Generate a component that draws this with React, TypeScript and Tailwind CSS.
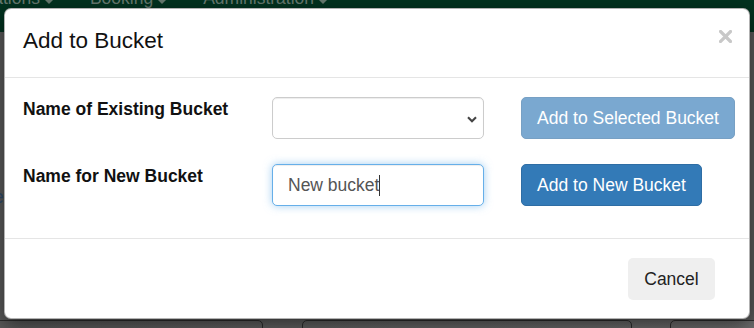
import React from "react";

function Caret() {
  return (
    <span className="inline-block shrink-0 w-0 h-0 border-l-[5px] border-r-[5px] border-t-[5px] border-l-transparent border-r-transparent border-t-[#66796f] ml-[4px]" />
  );
}

export default function App() {
  return (
    <div className="relative w-[754px] h-[328px] overflow-hidden bg-[#5a5a5a] font-['Liberation_Sans',Arial,sans-serif]">
      {/* page behind the backdrop */}
      <nav className="h-[32px] bg-[#02321f] overflow-hidden">
        <div className="flex items-baseline -mt-[14.5px] text-[17.5px] leading-[25px] text-[#66796f] whitespace-nowrap">
          <span className="shrink-0 -ml-[35px]">Locations</span>
          <Caret />
          <span className="shrink-0 ml-[36px]">Booking</span>
          <Caret />
          <span className="shrink-0 ml-[36px]">Administration</span>
          <Caret />
        </div>
      </nav>
      <div className="pt-[152.5px] -ml-[6px] text-[17.5px] leading-[25px] text-[#2d4a6b]">e</div>
      <div className="mt-[110.5px] flex h-[20px] bg-gradient-to-r from-[#595959] to-[#6c6c6c]">
        <div className="shrink-0 -ml-[10px] w-[273px] h-[20px] border border-[#2c2c2c] rounded-[5px]" />
        <div className="shrink-0 ml-[39px] w-[330px] h-[20px] border border-[#2c2c2c] rounded-[5px]" />
        <div className="shrink-0 ml-[38px] w-[100px] h-[20px] border border-[#2c2c2c] rounded-[5px]" />
      </div>

      {/* modal */}
      <div className="absolute left-[4px] top-[8px] w-[746px] h-[311px] bg-white rounded-[7px] border border-black/30 shadow-[0_6px_19px_rgba(0,0,0,0.5)] flex flex-col text-[#111]">
        <div className="h-[69px] border-b border-[#e5e5e5] flex items-start justify-between pl-[18px] pr-[17px]">
          <h4 className="mt-[16px] text-[22.5px] leading-[32px] text-[#111]">Add to Bucket</h4>
          <svg className="mt-[21px]" width="13" height="13" viewBox="0 0 13 13">
            <path d="M1.5 1.5 L11.5 11.5 M11.5 1.5 L1.5 11.5" stroke="#c8c8c8" strokeWidth="3.2" strokeLinecap="square" />
          </svg>
        </div>

        <div className="h-[160px] pt-[19px] pl-[18px]">
          <div className="flex">
            <label className="w-[249px] text-[17.5px] leading-[25px] font-bold text-[#111]">Name of Existing Bucket</label>
            <div className="w-[212px] h-[42px] border border-[#cccccc] rounded-[5px] bg-white shadow-[inset_0_1px_1px_rgba(0,0,0,0.075)] flex items-center justify-end pr-[6px]">
              <svg width="10" height="7" viewBox="0 0 10 7" className="mt-[2px]">
                <path d="M1 1.2 L5 5.2 L9 1.2" fill="none" stroke="#444" strokeWidth="2.1" />
              </svg>
            </div>
            <button className="ml-[37px] w-[214px] h-[42px] rounded-[5px] bg-[#7aa8d0] border border-[#77a0c4] text-white text-[17.5px] leading-[25px]">
              Add to Selected Bucket
            </button>
          </div>

          <div className="flex mt-[25px]">
            <label className="w-[249px] text-[17.5px] leading-[25px] font-bold text-[#111]">Name for New Bucket</label>
            <div className="w-[212px] h-[42px] border border-[#66afe9] rounded-[5px] bg-white shadow-[0_0_8px_rgba(102,175,233,0.6),inset_0_1px_1px_rgba(0,0,0,0.075)] flex items-center pl-[15px] text-[17.5px] text-[#555]">
              <span>New bucket</span>
              <span className="w-px h-[21px] bg-[#333] mt-[1px]" />
            </div>
            <button className="ml-[37px] w-[181px] h-[42px] rounded-[5px] bg-[#337ab7] border border-[#2e6da4] text-white text-[17.5px] leading-[25px]">
              Add to New Bucket
            </button>
          </div>
        </div>

        <div className="border-t border-[#e5e5e5] flex justify-end pt-[19px] pr-[34px]">
          <button className="w-[87px] h-[42px] rounded-[5px] bg-[#efefef] text-[#222] text-[17.5px] leading-[25px]">
            Cancel
          </button>
        </div>
      </div>
    </div>
  );
}
